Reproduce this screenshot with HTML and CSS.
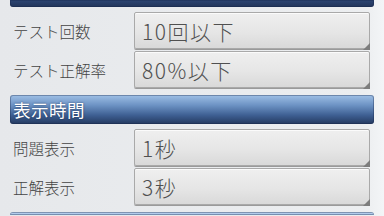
FILE: index.html
```html
<!DOCTYPE html>
<html lang="ja">
<head>
  <meta charset="UTF-8">
  <title>設定</title>
  <link rel="stylesheet" href="styles.css">
</head>
<body>
  <div class="page">
    <div class="bar bar-top"></div>

    <div class="rows">
      <div class="row">
        <span class="label">テスト回数</span>
        <div class="value">10回以下</div>
      </div>
      <div class="row">
        <span class="label">テスト正解率</span>
        <div class="value">80%以下</div>
      </div>
    </div>

    <div class="bar"><span>表示時間</span></div>

    <div class="rows">
      <div class="row">
        <span class="label">問題表示</span>
        <div class="value">1秒</div>
      </div>
      <div class="row">
        <span class="label">正解表示</span>
        <div class="value">3秒</div>
      </div>
    </div>

    <div class="bar bar-next"></div>
  </div>
</body>
</html>
```

FILE: styles.css
```css
html, body {
  margin: 0;
  height: 100%;
  overflow: hidden;
}
body {
  font-family: "Noto Sans CJK JP", "Noto Sans", sans-serif;
  background: linear-gradient(to right, #e6e8eb 0%, #eceef0 95%, #f3f5f7 100%);
  color: #4e4e4e;
}
.page {
  width: 364px;
  padding-left: 10px;
}
.bar {
  height: 29px;
  border-radius: 3px;
  background: linear-gradient(to bottom, #9fc0e6 0%, #6d93c4 35%, #3e5f92 70%, #24395f 100%);
  box-shadow: inset 0 0 0 1px rgba(20, 35, 70, 0.35);
  display: flex;
  align-items: center;
  padding-left: 3px;
  margin-top: 7px;
}
.bar span {
  color: #fff;
  font-size: 17.5px;
  letter-spacing: 0.5px;
  text-shadow: 0 0 2px rgba(10, 25, 60, 0.7);
}
.bar-top {
  height: 7px;
  margin-top: 0;
  border-radius: 0 0 3px 3px;
  background: linear-gradient(to bottom, #2d4674, #213459);
}
.bar-next {
  height: 3px;
  margin-top: 7px;
  border-radius: 3px 3px 0 0;
  background: linear-gradient(to bottom, #bcd3ee, #a8c6ea);
}
.rows {
  display: flex;
  flex-direction: column;
  gap: 2px;
  margin-top: 6px;
}
.bar + .rows {
  margin-top: 5px;
}
.row {
  display: flex;
  align-items: center;
}
.label {
  width: 124px;
  padding-left: 3px;
  box-sizing: border-box;
  font-size: 15.5px;
  font-weight: 300;
  color: #444;
}
.value {
  position: relative;
  width: 236px;
  height: 37px;
  box-sizing: border-box;
  border: 1px solid #a9a9a9;
  border-radius: 2px;
  background: linear-gradient(to bottom, #efefef 0%, #e6e6e6 55%, #d9d9d9 100%);
  box-shadow: inset 0 1px 0 #fbfbfb, 0 1px 0 #9a9a9a;
  padding-left: 7px;
  display: flex;
  align-items: center;
  font-size: 21px;
  font-weight: 300;
  letter-spacing: 1.5px;
  color: #505050;
}
.value::after {
  content: "";
  position: absolute;
  right: -1px;
  bottom: -2px;
  width: 0;
  height: 0;
  border-style: solid;
  border-width: 0 0 7px 7px;
  border-color: transparent transparent #7d7d7d transparent;
}
```
